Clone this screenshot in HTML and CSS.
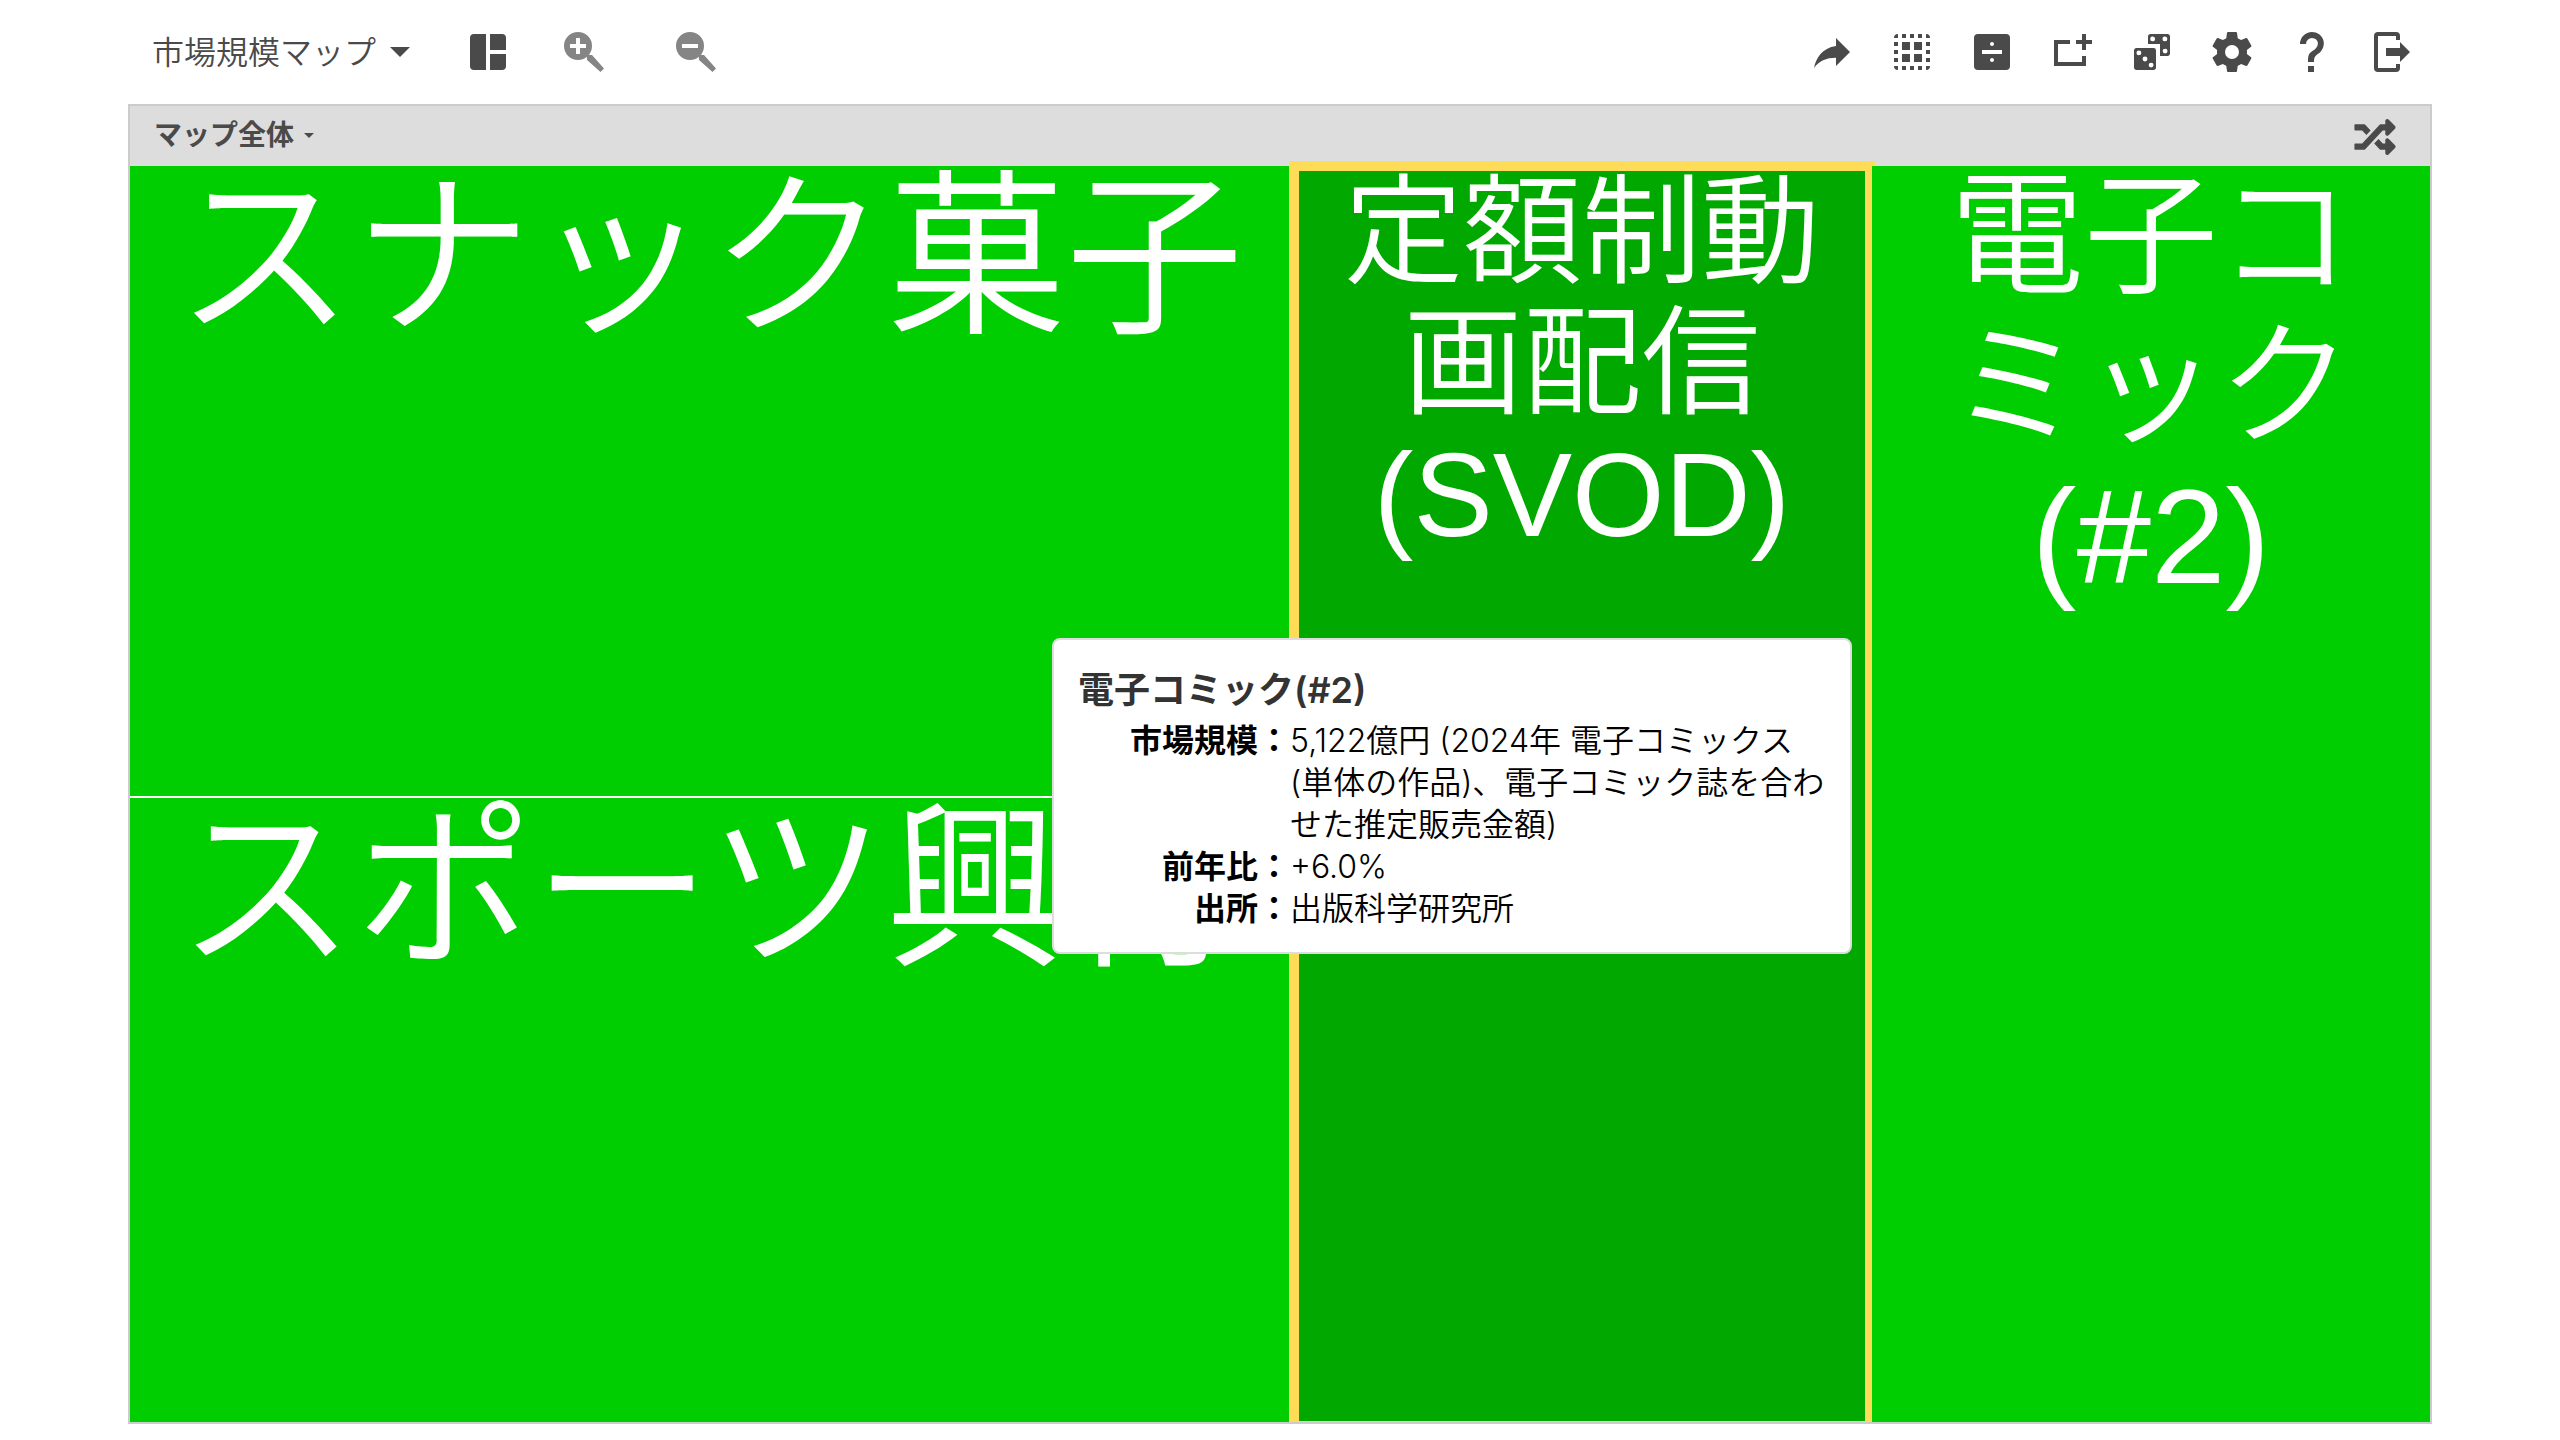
FILE: index.html
```html
<!DOCTYPE html>
<html lang="ja">
<head>
<meta charset="utf-8">
<title>市場規模マップ</title>
<link rel="stylesheet" href="styles.css">
</head>
<body>
<header class="toolbar">
  <button class="map-picker" type="button"><span class="picker-label">市場規模マップ</span><span class="caret"></span></button>
  <div class="view-tools">
    <button class="icon-button" type="button" aria-label="レイアウト"><svg viewBox="0 0 24 24"><path d="M11 21H5a2 2 0 0 1-2-2V5a2 2 0 0 1 2-2h6zM13 21h6a2 2 0 0 0 2-2v-6h-8zM21 11V5a2 2 0 0 0-2-2h-6v8z"/></svg></button>
    <button class="icon-button zoom" type="button" aria-label="拡大"><svg viewBox="0 0 40 40"><path fill-rule="evenodd" d="M14 0a14 14 0 1 1 0 28a14 14 0 0 1 0-28zM12 6v6H6v4h6v6h4v-6h6v-4h-6V6z"/><path d="M23 28v-4l1-1h4l12 13.500-3.500 3.500z"/></svg></button>
    <button class="icon-button zoom" type="button" aria-label="縮小"><svg viewBox="0 0 40 40"><path fill-rule="evenodd" d="M14 0a14 14 0 1 1 0 28a14 14 0 0 1 0-28zM6 12v4h16v-4z"/><path d="M23 28v-4l1-1h4l12 13.500-3.500 3.500z"/></svg></button>
  </div>
  <nav class="actions">
    <button class="icon-button" type="button" aria-label="共有"><svg viewBox="0 0 24 24"><path d="M14 9V5l7 7-7 7v-4.100c-5 0-8.500 1.600-11 5.100 1-5 4-10 11-11z"/></svg></button>
    <button class="icon-button" type="button" aria-label="選択"><svg viewBox="0 0 24 24"><path d="M3 5h2V3a2 2 0 0 0-2 2zM7 3h2v2H7zM11 3h2v2h-2zM15 3h2v2h-2zM19 3v2h2a2 2 0 0 0-2-2zM3 7h2v2H3zM3 11h2v2H3zM3 15h2v2H3zM19 7h2v2h-2zM19 11h2v2h-2zM19 15h2v2h-2zM3 19h2v2a2 2 0 0 1-2-2zM7 19h2v2H7zM11 19h2v2h-2zM15 19h2v2h-2zM19 21v-2h2a2 2 0 0 1-2 2zM7 7h4v4H7zM13 7h4v4h-4zM7 13h4v4H7zM13 13h4v4h-4z"/></svg></button>
    <button class="icon-button" type="button" aria-label="分割"><svg viewBox="0 0 24 24"><path fill-rule="evenodd" d="M5 3h14a2 2 0 0 1 2 2v14a2 2 0 0 1-2 2H5a2 2 0 0 1-2-2V5a2 2 0 0 1 2-2zM12 7a1 1 0 1 0 0 2a1 1 0 0 0 0-2zM7 11v2h10v-2zM12 15a1 1 0 1 0 0 2a1 1 0 0 0 0-2z"/></svg></button>
    <button class="icon-button" type="button" aria-label="追加"><svg viewBox="0 0 24 24"><path d="M3 6h8v2H5v9h12v-3h2v5H3zM17 3h2v3h3v2h-3v3h-2V8h-3V6h3z"/></svg></button>
    <button class="icon-button" type="button" aria-label="ランダム"><svg viewBox="0 0 24 24"><path fill-rule="evenodd" d="M19.780 3h-8.560C10.550 3 10 3.550 10 4.220V8h6v6h3.780c.670 0 1.220-.550 1.220-1.220V4.220C21 3.550 20.450 3 19.780 3m-7.340 3.670a1.230 1.230 0 1 1 0-2.450a1.230 1.230 0 0 1 0 2.450m6.120 6.110a1.220 1.220 0 1 1 0-2.450a1.220 1.220 0 0 1 0 2.450m0-6.110a1.230 1.230 0 1 1 0-2.450a1.230 1.230 0 0 1 0 2.450M4.220 10h8.560A1.220 1.220 0 0 1 14 11.220v8.560c0 .670-.550 1.220-1.220 1.220H4.220C3.550 21 3 20.450 3 19.780v-8.560c0-.670.550-1.220 1.220-1.220m1.220 1.220a1.220 1.220 0 1 0 0 2.450a1.220 1.220 0 0 0 0-2.450m3.060 3.060a1.220 1.220 0 1 0 0 2.440a1.220 1.220 0 0 0 0-2.440m3.060 3.050a1.220 1.220 0 1 0 0 2.450a1.220 1.220 0 0 0 0-2.450"/></svg></button>
    <button class="icon-button" type="button" aria-label="設定"><svg viewBox="0 0 24 24"><path d="M12 15.500A3.500 3.500 0 0 1 8.500 12A3.500 3.500 0 0 1 12 8.500a3.500 3.500 0 0 1 3.500 3.500a3.500 3.500 0 0 1-3.500 3.500m7.430-2.530c.04-.32.07-.64.07-.97s-.03-.66-.07-1l2.110-1.630c.19-.15.24-.42.12-.64l-2-3.460c-.12-.22-.39-.31-.61-.22l-2.490 1c-.52-.39-1.060-.73-1.690-.98l-.37-2.650A.506.506 0 0 0 14 2h-4c-.25 0-.46.18-.5.42l-.37 2.650c-.63.25-1.170.59-1.690.98l-2.490-1c-.22-.09-.49 0-.61.22l-2 3.460c-.13.22-.07.49.12.64L4.570 11c-.04.34-.07.67-.07 1s.03.65.07.97l-2.110 1.660c-.19.15-.25.42-.12.64l2 3.460c.12.22.39.3.61.22l2.490-1.010c.52.4 1.060.74 1.690.99l.37 2.650c.04.24.25.42.5.42h4c.25 0 .46-.18.5-.42l.37-2.650c.63-.26 1.170-.59 1.690-.99l2.490 1.010c.22.08.49 0 .61-.22l2-3.460c.12-.22.07-.49-.12-.64z"/></svg></button>
    <button class="icon-button" type="button" aria-label="ヘルプ"><svg viewBox="0 0 24 24"><path d="M10 19h3v3h-3zM12 2c5.350.220 7.680 5.620 4.500 9.670c-.83 1-2.170 1.660-2.830 2.500C13 15 13 16 13 17h-3c0-1.670 0-3.080.67-4.080c.66-1 2-1.590 2.830-2.250C15.920 8.430 15.320 5.260 12 5a3 3 0 0 0-3 3H6a6 6 0 0 1 6-6"/></svg></button>
    <button class="icon-button" type="button" aria-label="ログアウト"><svg viewBox="0 0 24 24"><path d="M14 2a2 2 0 0 1 2 2v2h-2V4H5v16h9v-2h2v2a2 2 0 0 1-2 2H5a2 2 0 0 1-2-2V4a2 2 0 0 1 2-2zM9 10h7V7l5 5-5 5v-3H9z"/></svg></button>
  </nav>
</header>
<main class="map">
  <div class="map-bar">
    <button class="scope-picker" type="button"><span class="picker-label">マップ全体</span><span class="caret small"></span></button>
    <button class="shuffle" type="button" aria-label="シャッフル"><svg viewBox="0 0 512 448"><path d="M504.971 327.029c9.373 9.373 9.373 24.569 0 33.941l-80 79.984c-15.010 15.010-40.971 4.490-40.971-16.971V384h-58.785a12.004 12.004 0 0 1-8.773-3.812l-70.556-75.596 53.333-57.143L352 304h32v-39.981c0-21.438 25.943-31.998 40.971-16.971zM12 144h84l52.781 56.551 53.333-57.143-70.556-75.596A11.999 11.999 0 0 0 122.785 64H12C5.373 64 0 69.373 0 76v56c0 6.627 5.373 12 12 12zm372 0v39.984c0 21.460 25.961 31.980 40.971 16.971l80-79.984c9.373-9.373 9.373-24.569 0-33.941L424.971 7.049C409.943-7.978 384 2.582 384 24.019V64h-58.785a12.004 12.004 0 0 0-8.773 3.812L96 304H12c-6.627 0-12 5.373-12 12v56c0 6.627 5.373 12 12 12h110.785c3.326 0 6.503-1.381 8.773-3.812L352 144z"/></svg></button>
  </div>
  <div class="tiles">
    <section class="stack">
      <article class="tile"><h2 class="tile-title large">スナック菓子</h2></article>
      <article class="tile"><h2 class="tile-title large">スポーツ興行</h2></article>
    </section>
    <article class="tile selected"><h2 class="tile-title small">定額制動<br>画配信<br>(SVOD)</h2></article>
    <article class="tile last"><h2 class="tile-title medium">電子コ<br>ミック<br>(#2)</h2></article>
    <aside class="tooltip" role="tooltip">
      <h3 class="tooltip-title">電子コミック(#2)</h3>
      <dl class="facts">
        <dt>市場規模：</dt><dd>5,122億円 (2024年 電子コミックス(単体の作品)、電子コミック誌を合わせた推定販売金額)</dd>
        <dt>前年比：</dt><dd>+6.0%</dd>
        <dt>出所：</dt><dd>出版科学研究所</dd>
      </dl>
    </aside>
  </div>
</main>
</body>
</html>
```
FILE: styles.css
```css
* { box-sizing: border-box; }

body {
  margin: 0;
  min-height: 100vh;
  padding: 0 5% 16px;
  display: flex;
  flex-direction: column;
  background: #fff;
  color: #4a4a4a;
  font-family: Inter, "Noto Sans CJK JP", sans-serif;
  font-weight: 350;
}

button {
  padding: 0;
  border: 0;
  background: none;
  color: inherit;
  font: inherit;
  cursor: pointer;
}

svg { display: block; fill: currentColor; }
h2, h3, dl, dd { margin: 0; }

.toolbar {
  height: 104px;
  padding: 0 16px 0 24px;
  display: flex;
  align-items: center;
}

.map-picker {
  display: flex;
  align-items: center;
  gap: 14px;
  font-size: 32px;
}
.picker-label { padding-bottom: 4px; }

.caret {
  border: 10px solid transparent;
  border-top-color: currentColor;
  border-bottom: 0;
}
.caret.small { border-width: 5px 5px 0; }

.view-tools {
  margin-left: 54px;
  display: flex;
  align-items: center;
}
.icon-button svg { width: 48px; height: 48px; }
.icon-button.zoom { margin-left: 52px; color: #858585; }
.icon-button.zoom + .zoom { margin-left: 72px; }
.icon-button.zoom svg { width: 40px; height: 40px; }

.actions {
  margin-left: auto;
  display: flex;
  gap: 32px;
}

.map {
  flex: 1;
  display: flex;
  flex-direction: column;
  border: 2px solid #ccc;
}

.map-bar {
  height: 60px;
  padding: 2px 34px 0 24px;
  display: flex;
  align-items: center;
  justify-content: space-between;
  background: #ddd;
}
.scope-picker {
  padding-bottom: 4px;
  display: flex;
  align-items: center;
  gap: 10px;
  font-size: 28px;
  font-weight: 700;
}
.shuffle svg { width: 42px; height: 36px; }

.tiles {
  position: relative;
  flex: 1;
  display: grid;
  grid-template-columns: 1159fr 583fr 558fr;
}
.stack {
  display: grid;
  grid-template-rows: 630fr 624fr;
  gap: 2px;
  background: #fff;
}
.tile {
  background: #00ce00;
  color: #fff;
  text-align: center;
}
.tile.selected {
  margin: -5px -3px 0 0;
  border: 10px solid #ffdc57;
  border-bottom-width: 1px;
  background: #00a800;
}
.tile.last { z-index: 1; }

.tile-title {
  margin-top: -4px;
  font-family: "Liberation Sans", "Noto Sans CJK JP", sans-serif;
  font-weight: 350;
  white-space: nowrap;
}
.large { font-size: 178px; line-height: 194px; }
.medium { font-size: 134px; line-height: 150px; }
.small { font-size: 119px; line-height: 131px; }

.tooltip {
  position: absolute;
  z-index: 2;
  top: 472px;
  left: 922px;
  width: 800px;
  padding: 26px 20px 22px 24px;
  border: 2px solid #ddd;
  border-radius: 8px;
  background: #fff;
  color: #000;
}
.tooltip-title {
  margin-bottom: 6px;
  color: #333;
  font-size: 36px;
  font-weight: 600;
  line-height: 48px;
}
.facts {
  display: grid;
  grid-template-columns: 212px 1fr;
  font-size: 32px;
  line-height: 42px;
}
.facts dt { font-weight: 700; text-align: right; }
```
